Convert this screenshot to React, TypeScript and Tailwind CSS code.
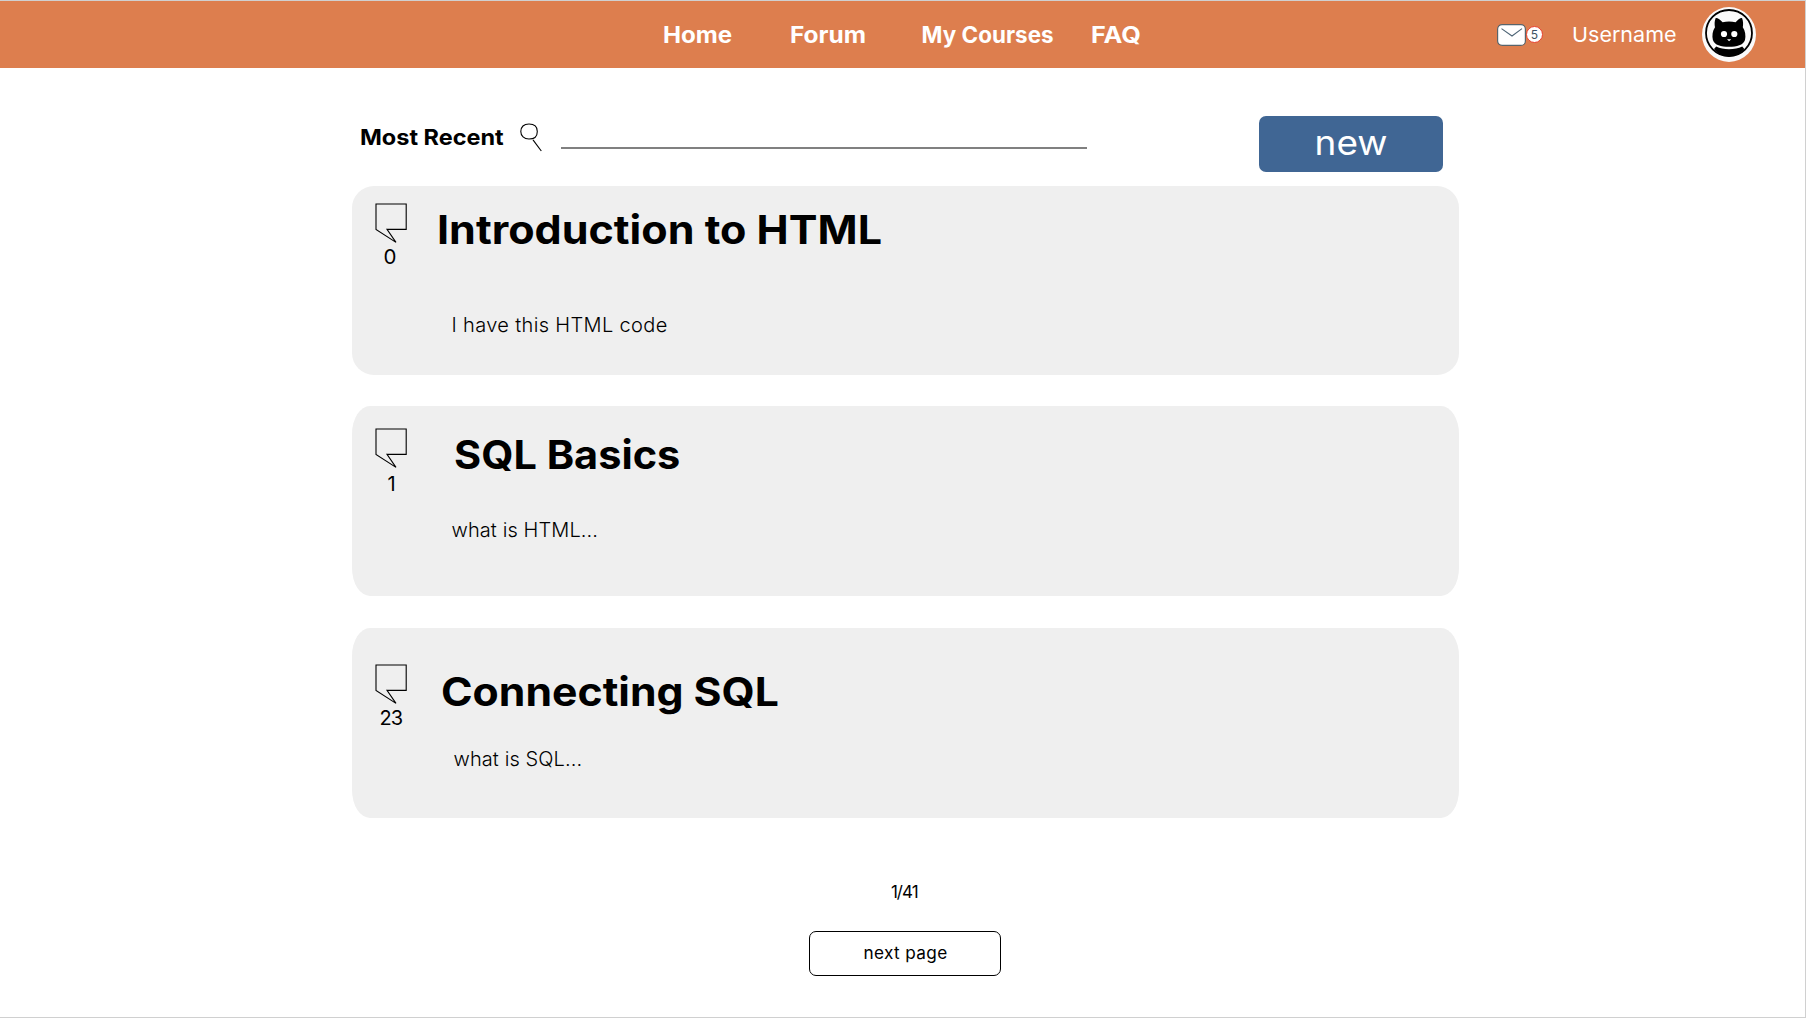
import React from 'react';

type Topic = {
  title: string;
  body: string;
  replies: string;
  card: string;
  aside: string;
  count: string;
  content: string;
  heading: string;
  text: string;
};

const topics: Topic[] = [
  {
    title: 'Introduction to HTML',
    body: 'I have this HTML code',
    replies: '0',
    card: 'mt-[13.5px] h-[189.5px] rounded-[22px]',
    aside: 'pt-[17.5px]',
    count: 'pl-[9px] text-[20.5px]',
    content: 'pt-[19.5px]',
    heading: 'ml-[28px] scale-x-[1.09]',
    text: 'mt-[57px] pl-[43px] tracking-[0.35px]',
  },
  {
    title: 'SQL Basics',
    body: 'what is HTML...',
    replies: '1',
    card: 'mt-[31px] h-[190px] rounded-[18px/28px]',
    aside: 'pt-[22px]',
    count: 'pl-[13px] pt-[2px] text-[20px]',
    content: 'pt-[24px]',
    heading: 'ml-[45px] scale-x-[1.05]',
    text: 'mt-[37px] pl-[43px] tracking-[0.1px]',
  },
  {
    title: 'Connecting SQL',
    body: 'what is SQL...',
    replies: '23',
    card: 'mt-[32px] h-[190px] rounded-[18px/28px]',
    aside: 'pt-[36px]',
    count: 'pl-[5px] text-[20px] tracking-[-1px]',
    content: 'pt-[39px]',
    heading: 'ml-[32px] scale-x-[1.082]',
    text: 'mt-[29px] pl-[45px] tracking-[0.1px]',
  },
];

function CommentIcon() {
  return (
    <svg width="33" height="41" viewBox="0 0 33 41" fill="none" stroke="#000" strokeWidth="1.1">
      <path d="M1 1H31.2V26.4H12L21 39.4L1 26.4Z" />
    </svg>
  );
}

function SearchIcon() {
  return (
    <svg width="23" height="30" viewBox="0 0 23 30" fill="none" stroke="#000" strokeWidth="1.1">
      <path d="M9 1C14.5 1 17.3 3.8 17.3 8.4C17.3 13.4 14 16 9 16C4 16 .8 13 .8 8.6C.8 3.8 3.8 1 9 1Z" />
      <path d="M13 16.8L21.3 28" />
    </svg>
  );
}

function MailIcon() {
  return (
    <svg width="29" height="22" viewBox="0 0 29 22" fill="none">
      <rect x=".6" y=".6" width="27.8" height="20.8" rx="4.5" fill="#fff" stroke="#58646b" strokeWidth="1.2" />
      <path d="M4.5 4.6L15 12L25 4.6" stroke="#4d6475" strokeWidth="1.1" />
    </svg>
  );
}

function Avatar() {
  return (
    <svg width="54" height="55" viewBox="0 0 54 55">
      <ellipse cx="27" cy="27.5" rx="27" ry="27.4" fill="#fafafa" />
      <circle cx="27" cy="26" r="23" fill="none" stroke="#000" strokeWidth="1.8" />
      <path
        d="M13.6 11.2C15 10.6 18.6 13 20.6 15.3C24.5 14.2 29.5 14.2 33.6 15.3C35.6 13 38.8 10.6 40.1 11.2C41.3 14 41.3 17.6 40.8 20.3C43.2 23.5 44 29 43 33C41.2 38.2 35 39.8 27 39.8C19 39.8 12.6 38.2 10.9 33C9.8 29 10.6 23.5 13 20.3C12.4 17.6 12.4 14 13.6 11.2Z"
        fill="#000"
      />
      <path
        d="M14.2 39.6C18 41.5 22 42.2 27 42.2C32 42.2 36.6 41.5 40.2 39.6L42.4 42C38.5 47.2 33 49.4 27 49.4C21 49.4 15.5 47.2 12 42Z"
        fill="#000"
      />
      <circle cx="22" cy="27" r="3.1" fill="#fff" />
      <circle cx="32.3" cy="27" r="3.1" fill="#fff" />
      <path d="M25 32.3H29.2L27.1 34.3Z" fill="#fff" />
    </svg>
  );
}

function Header() {
  return (
    <header className="flex h-[67px] items-center bg-[#dd7e4e] text-white">
      <nav className="flex w-[1497px] items-center pl-[662.5px] text-[22.4px] leading-[26px] font-bold whitespace-nowrap">
        <a className="w-[127px] origin-left scale-x-[1.077]">Home</a>
        <a className="w-[132px] origin-left scale-x-[1.09]">Forum</a>
        <a className="w-[169px] origin-left tracking-[0.05px]">My Courses</a>
        <a className="origin-left scale-x-[1.125]">FAQ</a>
      </nav>
      <div className="flex items-center">
        <MailIcon />
        <span className="flex size-[17px] items-center justify-center rounded-full border-[1.5px] border-[#e8402f] bg-white text-[12px] text-[#3d5263]">
          5
        </span>
        <span className="ml-[29px] w-[128px] origin-left scale-x-[1.05] text-[20.5px] leading-[26px]">Username</span>
        <span className="ml-[2px]">
          <Avatar />
        </span>
      </div>
    </header>
  );
}

function Toolbar() {
  return (
    <div className="flex h-[57px] items-start">
      <span className="mt-[9px] ml-[8px] w-[160px] origin-left scale-x-[1.067] text-[22px] leading-[26px] font-bold whitespace-nowrap">
        Most Recent
      </span>
      <span className="mt-[8px]">
        <SearchIcon />
      </span>
      <div className="mt-[32px] ml-[18px] h-[2px] w-[526px] bg-[#808080]" />
      <button className="mt-[0.5px] ml-[172.5px] flex h-[56px] w-[183.5px] items-center justify-center rounded-[7px] bg-[#406694] pb-[2px] text-[34.5px] leading-[40px] text-white">
        <span className="scale-x-[1.07]">new</span>
      </button>
    </div>
  );
}

function TopicCard({ topic }: { topic: Topic }) {
  return (
    <article className={`flex w-[1107.5px] bg-[#efefef] ${topic.card}`}>
      <div className={`flex w-[57px] flex-col pl-[23px] ${topic.aside}`}>
        <CommentIcon />
        <span className={`leading-[26px] ${topic.count}`}>{topic.replies}</span>
      </div>
      <div className={`flex flex-col ${topic.content}`}>
        <h2 className={`origin-left text-[39.5px] leading-[50px] font-bold whitespace-nowrap ${topic.heading}`}>
          {topic.title}
        </h2>
        <p className={`text-[20px] leading-[26px] font-light whitespace-nowrap ${topic.text}`}>{topic.body}</p>
      </div>
    </article>
  );
}

export default function App() {
  return (
    <div className="h-[1018px] w-[1806px] overflow-hidden border-t border-r border-b border-[#d0d0d0] bg-white font-['Inter',sans-serif] text-black">
      <Header />
      <main className="ml-[351.5px] flex w-[1107.5px] flex-col pt-[47px]">
        <Toolbar />
        {topics.map((topic) => (
          <TopicCard key={topic.title} topic={topic} />
        ))}
        <span className="mt-[61px] mr-[2px] self-center text-[17px] leading-[26px] tracking-[-1px]">1/41</span>
        <button className="mt-[25.5px] ml-[457.5px] h-[45.5px] w-[192px] rounded-[7px] border border-black pb-px pl-[1px] text-[17.2px] leading-[26px] tracking-[0.35px]">
          next page
        </button>
      </main>
    </div>
  );
}
